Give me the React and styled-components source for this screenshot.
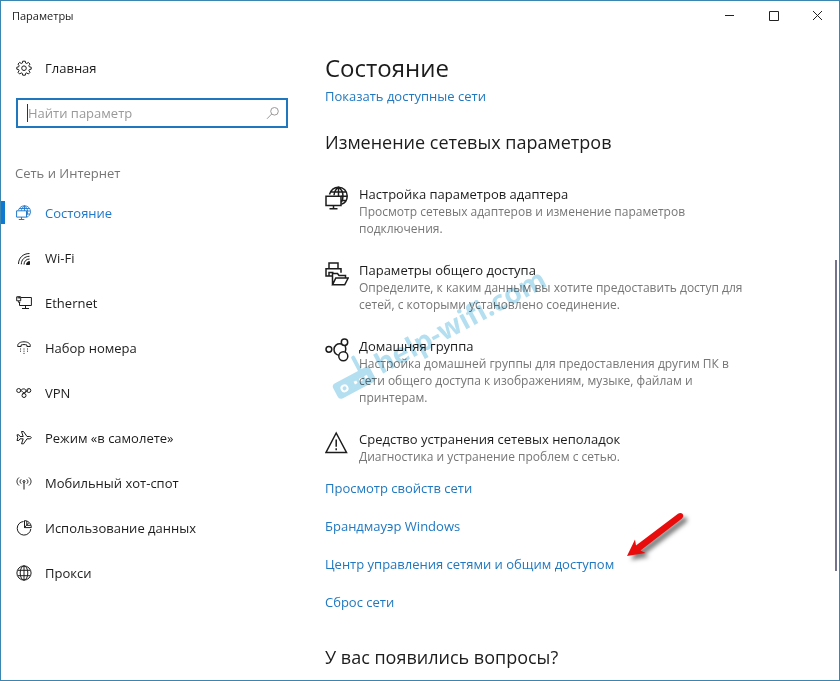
import React from 'react';
import styled, { createGlobalStyle } from 'styled-components';

const menus = [
    { name: 'Состояние', icon: 'status', active: true },
    { name: 'Wi-Fi', icon: 'wifi' },
    { name: 'Ethernet', icon: 'ethernet' },
    { name: 'Набор номера', icon: 'dial' },
    { name: 'VPN', icon: 'vpn' },
    { name: 'Режим «в самолете»', icon: 'plane' },
    { name: 'Мобильный хот-спот', icon: 'hotspot' },
    { name: 'Использование данных', icon: 'usage' },
    { name: 'Прокси', icon: 'globe' },
];

const options = [
    {
        title: 'Настройка параметров адаптера',
        text: 'Просмотр сетевых адаптеров и изменение параметров подключения.',
        icon: 'adapter',
    },
    {
        title: 'Параметры общего доступа',
        text: 'Определите, к каким данным вы хотите предоставить доступ для сетей, с которыми установлено соединение.',
        icon: 'sharing',
    },
    {
        title: 'Домашняя группа',
        text: 'Настройка домашней группы для предоставления другим ПК в сети общего доступа к изображениям, музыке, файлам и принтерам.',
        icon: 'homegroup',
    },
    {
        title: 'Средство устранения сетевых неполадок',
        text: 'Диагностика и устранение проблем с сетью.',
        icon: 'warning',
    },
];

const links = [
    { name: 'Просмотр свойств сети' },
    { name: 'Брандмауэр Windows' },
    { name: 'Центр управления сетями и общим доступом', marked: true },
    { name: 'Сброс сети' },
];

// 16x16 icons of the side menu
const smallIcons = {
    gear: (
        <>
            <path d="M6.7 1.2h2.6l.4 1.9 1 .4 1.7-1.1 1.6 1.7-1.1 1.6.4 1.1 1.9.4v2l-1.9.4-.4 1.1 1.1 1.6-1.6 1.7-1.7-1.1-1 .4-.4 1.9H6.7l-.4-1.9-1-.4-1.7 1.1L2 12.3l1.1-1.6-.4-1.1L.8 9.2v-2l1.9-.4.4-1.1L2 4.100l1.6-1.7 1.7 1.1 1-.4z" />
            <circle cx="8" cy="8.2" r="2.3" />
        </>
    ),
    status: (
        <>
            <path d="M2.500 5C3.500 2.300 6 .8 8.500.8c3.400 0 6 2.600 6 5.900 0 2.600-1.500 4.800-3.900 5.600M8.500.8C6.500 2.300 5.500 4 5.400 5.500M8.500.8c2.100 1.500 3.100 3.500 3.100 5.900 0 1.700-.4 3.100-1.200 4.300M3.200 3.500h10.500M8.500.8v5M10.500 6h3.900M11 9h2.900" strokeWidth="0.9" />
            <path d="M.6 5.800h9.900v6.300H.6zM5.500 12.100v2.400M2.800 14.500h5.500" />
        </>
    ),
    wifi: (
        <>
            <path d="M2.500 14C2.500 8 7 3.500 13.500 3.500M5.300 14.300c0-4.600 3.400-8 8.200-8M8 14.500c0-3.200 2.300-5.500 5.500-5.500" />
            <path d="M10.500 14.500c0-1.700 1.300-3 3-3v3z" fill="currentColor" />
        </>
    ),
    ethernet: (
        <>
            <path d="M5 2.500h10.400v8H3.500V7.500M9.500 10.500v3M6 13.500h7" />
            <path d="M.7 1.800h4v4H.7zM2.200 1.500v2M3.400 1.500v2M2.700 6v1.500h1.500" />
        </>
    ),
    dial: (
        <>
            <path d="M1.700 5.700C1.700 3.200 4.500 1.800 8 1.800s6.300 1.400 6.300 3.900v.8h-3.400V5c-1.800-.6-4-.6-5.800 0v1.500H1.700z" />
            <path d="M4 9h1M7.500 9h1M11 9h1M4 11.200h1M7.500 11.200h1M11 11.200h1M7.500 13.400h1" />
        </>
    ),
    vpn: (
        <>
            <circle cx="2.700" cy="5.500" r="2" />
            <path d="M4.700 5.500c2-2.600 5.200-1.800 5.200.2 0 1.800-2.500 1.800-3.600 3.200M4.700 5.500c1.500 0 2 2.500 3.700 2.500 1.800 0 2.300-2.500 4-3.300" />
            <circle cx="12.800" cy="5.500" r="2" />
            <circle cx="8" cy="10.500" r="2" />
        </>
    ),
    plane: (
        <path d="M1 4.800h1.800L4 6.500h3.200L5.500 1.500h2L11 6.500h2.800c2 .3 2 2 0 2.300H11l-3.500 5H5.500l1.700-5H4l-1.200 1.700H1l.8-2.800z" />
    ),
    hotspot: (
        <>
            <path d="M3 2.500C.3 4.800.3 8.200 3 10.500M5.200 4.300c-1.500 1.300-1.500 3.100 0 4.400M13 2.500c2.700 2.300 2.700 5.700 0 8M10.800 4.300c1.500 1.300 1.500 3.100 0 4.400M8 7.500V14.500" />
            <circle cx="8" cy="6.500" r="1" />
        </>
    ),
    usage: (
        <>
            <path d="M7.500 1.500a6.800 6.800 0 1 0 7.300 7.500" />
            <path d="M8.500.6v7h6.800C15.300 3.600 12.500.8 8.500.6zM8.500 7.600l4.400-5M10.800 1v4M11 5.300h3.800" />
        </>
    ),
    globe: (
        <>
            <circle cx="8" cy="8" r="7.100" />
            <path d="M8 .9v14.200M1.900 5.300h12.200M1.900 10.700h12.200" />
            <ellipse cx="8" cy="8" rx="3.800" ry="7.100" />
        </>
    ),
};

// 24x24 icons of the option list
const largeIcons = {
    adapter: (
        <>
            <path d="M4.500 8.500C5.800 4 9.500 1.200 13.500 1.200c5 0 8.700 3.800 8.700 8.800 0 4-2.300 7.200-5.900 8.300M13.500 1.200c-2.800 2-4.200 4.500-4.500 8M13.500 1.200c3.200 2.300 4.500 5.300 4.500 8.800 0 2.500-.6 4.500-1.700 6.300M13.500 1.200v9M5.800 6h14.900M16 10.200h6.200M16 14.500h5" />
            <path d="M1 10.200h15v9.200H1zM8.500 19.500v3M4.500 22.700h8" />
        </>
    ),
    sharing: (
        <>
            <path d="M4 6.500V1h9v5.500M7.500 14H1V6.800h15v4M4 14v-3.500h4.500M4 6.800h9" />
            <path d="M7.500 22.800V11.500h5l1.500 2h6.500v2.500M7.500 22.800l3.300-6.800h12.400l-3.500 6.800z" />
        </>
    ),
    homegroup: (
        <>
            <circle cx="3.900" cy="11.300" r="2.900" />
            <circle cx="19.500" cy="4.300" r="3.200" />
            <circle cx="18.300" cy="18.300" r="4.500" />
            <path d="M16.200 5.900c-4.400-.7-7.200 2-7.200 5.600 0 2.700 1.800 5 4.900 5.900M20.200 7.500c.8 2.300.7 4.300 0 6.500" />
        </>
    ),
    warning: (
        <>
            <path d="M11.200 2L21.500 21.500H1z" />
            <path d="M11.200 8.500v7.300M11.200 17.300v2" />
        </>
    ),
};

function App() {
    return (
        <Window>
            <GlobalStyle />
            <TitleBar>
                <Caption>Параметры</Caption>
                <WindowButton aria-label="Свернуть">
                    <svg width="11" height="11"><path d="M1 5.500h9" /></svg>
                </WindowButton>
                <WindowButton aria-label="Развернуть">
                    <svg width="11" height="11"><path d="M1.500 1.500h9v9h-9z" /></svg>
                </WindowButton>
                <WindowButton aria-label="Закрыть">
                    <svg width="11" height="11"><path d="M1 1l9 9M10 1l-9 9" /></svg>
                </WindowButton>
            </TitleBar>
            <Body>
                <Sidebar>
                    <Home href="#home">
                        <SmallIcon viewBox="0 0 16 16">{smallIcons.gear}</SmallIcon>
                        Главная
                    </Home>
                    <SearchBox>
                        <Caret />
                        <SearchInput type="text" placeholder="Найти параметр" aria-label="Найти параметр" />
                        <SearchIcon viewBox="0 0 14 14">
                            <circle cx="8.500" cy="5.300" r="3.800" />
                            <path d="M5.700 8L1 12.800" />
                        </SearchIcon>
                    </SearchBox>
                    <Section>Сеть и Интернет</Section>
                    <nav>
                        {menus.map((menu) => (
                            <Menu key={menu.name} href={'#' + menu.icon} $active={menu.active}>
                                <SmallIcon viewBox="0 0 16 16">{smallIcons[menu.icon]}</SmallIcon>
                                {menu.name}
                            </Menu>
                        ))}
                    </nav>
                </Sidebar>
                <Main>
                    <PageTitle>Состояние</PageTitle>
                    <Link href="#networks">Показать доступные сети</Link>
                    <SubTitle>Изменение сетевых параметров</SubTitle>
                    <OptionList>
                        {options.map((option) => (
                            <Option key={option.icon} href={'#' + option.icon}>
                                <LargeIcon viewBox="0 0 24 24">{largeIcons[option.icon]}</LargeIcon>
                                <div>
                                    <OptionTitle>{option.title}</OptionTitle>
                                    <OptionText>{option.text}</OptionText>
                                </div>
                            </Option>
                        ))}
                        <Watermark />
                    </OptionList>
                    <LinkList>
                        {links.map((link) => (
                            <Link key={link.name} href="#link">
                                {link.name}
                                {link.marked && <RedArrow />}
                            </Link>
                        ))}
                    </LinkList>
                    <SubTitle>У вас появились вопросы?</SubTitle>
                </Main>
                <ScrollTrack>
                    <ScrollThumb />
                </ScrollTrack>
            </Body>
        </Window>
    );
}

function Watermark() {
    return (
        <WatermarkBox aria-hidden="true">
            <svg width="46" height="42" viewBox="0 0 46 42">
                <rect x="1" y="18" width="42" height="17" rx="4" />
                <rect x="31" y="2" width="4" height="20" rx="2" />
                <circle cx="11" cy="27" r="3" fill="none" stroke="#fff" strokeWidth="2" />
                <path d="M22 27h3M28 27h3M34 27h3" stroke="#fff" strokeWidth="3" />
            </svg>
            help-wifi.com
        </WatermarkBox>
    );
}

function RedArrow() {
    return (
        <ArrowSvg viewBox="0 0 70 56" aria-hidden="true">
            <path d="M3 45L11 28.500l1 6L54 2.700c4-2.700 7.300 2 3.700 5L16.500 39.500l5 2.500z" />
        </ArrowSvg>
    );
}

export default App;

const GlobalStyle = createGlobalStyle`
    * {
        box-sizing: border-box;
    }

    body {
        margin: 0;
        background-color: white;
        color: #1c1c1c;
        font-family: "Open Sans", "Noto Sans", sans-serif;
        font-size: 13px;
    }

    a {
        color: inherit;
        text-decoration: none;
    }
`;

// window frame
const Window = styled.div`
    min-height: 100vh;
    display: flex;
    flex-direction: column;
    border: 1px solid #3b86b0;
    overflow: hidden;
`;

const TitleBar = styled.header`
    display: flex;
    align-items: center;
    height: 29px;
`;

const Caption = styled.div`
    flex: 1;
    padding-left: 11px;
    font-size: 11px;
`;

const WindowButton = styled.button`
    width: 44px;
    height: 29px;
    display: flex;
    align-items: center;
    justify-content: center;
    padding: 0;
    border: none;
    background: none;

    svg {
        fill: none;
        stroke: #222;
    }
`;

const Body = styled.div`
    flex: 1;
    display: flex;
`;

// left column
const Sidebar = styled.aside`
    width: 287px;
    flex-shrink: 0;
    padding-top: 18px;
`;

const Home = styled.a`
    display: flex;
    align-items: center;
    gap: 13px;
    height: 40px;
    padding-left: 15px;
`;

const SearchBox = styled.label`
    display: flex;
    align-items: center;
    height: 30px;
    margin: 10px 0 0 15px;
    padding: 0 6px 0 9px;
    border: 2px solid #1f78bd;
`;

const Caret = styled.span`
    width: 1px;
    height: 18px;
    background-color: #333;
`;

const SearchInput = styled.input`
    flex: 1;
    min-width: 0;
    padding: 0;
    border: none;
    outline: none;
    background: none;
    font: inherit;

    &::placeholder {
        color: #999;
    }
`;

const SearchIcon = styled.svg`
    width: 14px;
    height: 14px;
    fill: none;
    stroke: #999;
`;

const Section = styled.div`
    margin-top: 35px;
    padding-left: 14px;
    line-height: 20px;
    color: #767676;
`;

const Menu = styled.a`
    display: flex;
    align-items: center;
    gap: 13px;
    height: 45px;
    padding-left: 15px;
    color: ${(props) => (props.$active ? '#1f78c8' : '#1c1c1c')};
    background: ${(props) => (props.$active ? 'linear-gradient(#0f78d0, #0f78d0) left / 4px 23px no-repeat' : 'none')};

    &:first-child {
        margin-top: 7px;
    }
`;

const SmallIcon = styled.svg`
    width: 16px;
    height: 16px;
    flex-shrink: 0;
    fill: none;
    stroke: currentColor;
`;

// right column
const Main = styled.main`
    flex: 1;
    padding: 21px 0 0 37px;
`;

const PageTitle = styled.h1`
    margin: 0;
    font-size: 24px;
    font-weight: 400;
    line-height: 34px;
`;

const Link = styled.a`
    position: relative;
    display: block;
    width: fit-content;
    color: #1f78c0;
    line-height: 22px;
`;

const SubTitle = styled.h2`
    margin: 22px 0 0;
    font-size: 18px;
    font-weight: 400;
    line-height: 26px;
`;

const OptionList = styled.div`
    position: relative;
    display: flex;
    flex-direction: column;
    gap: 24px;
    margin-top: 30px;
`;

const Option = styled.a`
    display: flex;
    gap: 10px;
`;

const LargeIcon = styled.svg`
    width: 24px;
    height: 24px;
    flex-shrink: 0;
    margin-top: 1px;
    fill: none;
    stroke: currentColor;
    stroke-width: 1.5;
`;

const OptionTitle = styled.div`
    line-height: 18px;
`;

const OptionText = styled.div`
    max-width: 392px;
    color: #767676;
    font-size: 12px;
    line-height: 17px;
`;

const LinkList = styled.div`
    display: flex;
    flex-direction: column;
    gap: 16px;
    margin: 12px 0 31px;
`;

const ScrollTrack = styled.div`
    display: grid;
    grid-template-rows: 230fr 311fr 109fr;
    width: 4px;
`;

const ScrollThumb = styled.div`
    grid-row: 2;
    width: 2px;
    background-color: #74748c;
`;

// lies over the option list
const WatermarkBox = styled.div`
    position: absolute;
    left: -7px;
    top: 126px;
    display: flex;
    align-items: center;
    gap: 4px;
    color: #b4dff0;
    font-size: 28px;
    font-weight: 700;
    line-height: 32px;
    transform: rotate(-28deg);
    mix-blend-mode: multiply;
    pointer-events: none;

    svg {
        fill: currentColor;
    }
`;

// points at the link from the right
const ArrowSvg = styled.svg`
    position: absolute;
    left: 100%;
    bottom: 8px;
    width: 70px;
    height: 56px;
    margin-left: 10px;
    fill: #e80c0c;
    filter: drop-shadow(4px 4px 2px rgba(0, 0, 0, 0.5));
    pointer-events: none;
`;
